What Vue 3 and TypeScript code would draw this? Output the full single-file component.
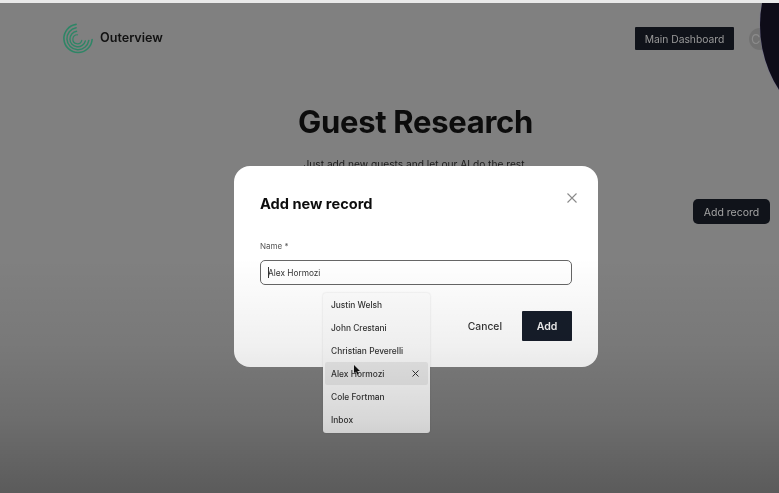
<script setup lang="ts">
const names: string[] = ['Justin Welsh', 'John Crestani', 'Christian Peverelli', 'Alex Hormozi', 'Cole Fortman', 'Inbox']
</script>

<template>
  <div class="page">
    <header class="top">
      <div class="brand">
        <svg class="logo" width="32" height="32" viewBox="0 0 34 33" fill="none" stroke="#2f8566" stroke-linecap="round">
          <path d="M15 1A15 15 0 1 0 32 17" stroke-width="1.7" />
          <path d="M15 4.6A11.7 11.7 0 1 0 28.5 18" stroke-width="1.6" />
          <path d="M15.5 8.3A8.3 8.3 0 1 0 24.8 18.5" stroke-width="1.5" />
          <path d="M16.5 12A4.8 4.8 0 1 0 21 18" stroke-width="1.3" />
        </svg>
        <span class="brand-name">Outerview</span>
      </div>
      <div class="top-right">
        <button class="dash">Main Dashboard</button>
        <span class="avatar">C</span>
      </div>
    </header>
    <main class="main">
      <h1 class="title">Guest Research</h1>
      <p class="sub">Just add new guests and let our AI do the rest.</p>
    </main>
    <div class="actions"><button class="add-record">Add record</button></div>

    <div class="blob"></div>

    <section class="modal">
      <div class="modal-head">
        <h2 class="modal-title">Add new record</h2>
        <svg class="close" width="10" height="10" viewBox="0 0 10 10" stroke="#8a8a8a" stroke-width="1.1"><path d="M.5.5l9 9M9.5.5l-9 9" /></svg>
      </div>
      <label class="label">Name *</label>
      <div class="input"><span class="caret"></span>Alex Hormozi</div>
      <div class="foot">
        <span class="cancel">Cancel</span>
        <button class="add">Add</button>
      </div>
    </section>

    <ul class="menu">
      <li v-for="n in names" :key="n" class="item" :class="{ on: n === 'Alex Hormozi' }">
        <span>{{ n }}</span>
        <svg v-if="n === 'Alex Hormozi'" width="7" height="7" viewBox="0 0 7 7" stroke="#333" stroke-width="1"><path d="M.5.5l6 6M6.5.5l-6 6" /></svg>
      </li>
    </ul>
    <svg class="cursor" width="7" height="10" viewBox="0 0 7 10"><path d="M0 0v8l2-1.6L3.4 9.6l1.3-.5L3.4 6H6z" fill="#111" /></svg>

    <div class="shade"></div>
  </div>
</template>

<style>
html, body { margin: 0; background: #7f7f7f; }
</style>

<style scoped>
.page {
  position: relative;
  width: 779px;
  height: 493px;
  box-sizing: border-box;
  overflow: hidden;
  background: #808080;
  border-top: 3px solid #e9e9e9;
  font-family: Inter, "Liberation Sans", sans-serif;
  filter: blur(0.45px);
}
.top {
  display: flex;
  justify-content: space-between;
  align-items: center;
  padding: 19px 0 0 62px;
  height: 33px;
}
.brand { display: flex; align-items: center; gap: 6px; }
.logo { display: block; }
.brand-name { font-size: 12.6px; font-weight: 600; color: #111; margin-top: -3px; }
.top-right { display: flex; align-items: center; gap: 15px; margin-right: 8px; margin-top: 0; }
.dash {
  width: 99px; height: 23px; padding: 1px 0 0; border: 0; border-radius: 1px;
  background: #10131a; color: #9a9a9a; font: 400 10.3px Inter, sans-serif;
}
.avatar {
  width: 22px; height: 22px; box-sizing: border-box; padding-left: 2px; border-radius: 50%; background: #727272; color: #8c8c8c;
  font-size: 13px; display: flex; align-items: center;
}
.main { display: flex; flex-direction: column; align-items: center; padding: 47px 0 0 52px; }
.title { margin: 0; font-size: 31px; line-height: 40px; font-weight: 700; color: #0c0c0c; letter-spacing: -.3px; }
.sub { margin: 15px 0 0; font-size: 10.2px; line-height: 14px; color: #1a1a1a; }
.actions { display: flex; justify-content: flex-end; padding: 28px 9px 0 0; }
.add-record {
  width: 77px; height: 25px; padding: 1px 0 0; border: 0; border-radius: 5px;
  background: #10131a; color: #a4a4a4; font: 400 10.5px Inter, sans-serif;
}
.blob {
  position: absolute; left: 760px; top: -98px; width: 240px; height: 240px;
  border-radius: 50%; background: #0e0c18; box-shadow: 0 0 1px #6b64a0;
}
.modal {
  position: absolute; left: 234px; top: 163px; width: 364px; height: 201px;
  box-sizing: border-box; padding: 28px 26px 0; border-radius: 16px; background: #fff;
  display: flex; flex-direction: column;
}
.modal-head { display: flex; justify-content: space-between; align-items: flex-start; }
.modal-title { margin: 0; font-size: 14.6px; line-height: 20px; font-weight: 700; color: #0d0d0d; }
.close { margin-top: -1px; margin-right: -5px; }
.label { margin-top: 26px; font-size: 8px; line-height: 12px; color: #555; }
.input {
  margin-top: 8px; height: 25px; box-sizing: border-box; border: 1px solid #666; border-radius: 5px;
  display: flex; align-items: center; padding-left: 7px; font-size: 8.3px; color: #333;
}
.caret { width: 1px; height: 11px; background: #333; margin-right: -1px; }
.foot { display: flex; justify-content: flex-end; align-items: center; gap: 21px; margin-top: 26px; }
.cancel { font-size: 10.3px; font-weight: 500; color: #333; margin-right: -1px; }
.add {
  width: 50px; height: 30px; padding: 0; border: 0; border-radius: 1px;
  background: #161d2a; color: #f2f2f2; font: 600 10.5px Inter, sans-serif;
}
.menu {
  position: absolute; left: 323px; top: 290px; width: 107px; height: 140px;
  box-sizing: border-box; margin: 0; padding: 0 2px 2px; list-style: none; border-radius: 3px;
  background: #fdfdfd; box-shadow: 0 0 2px rgba(0,0,0,.15);
  display: flex; flex-direction: column; justify-content: center;
}
.item {
  height: 23px; flex: none; display: flex; align-items: center; justify-content: space-between;
  padding: 0 9px 0 6px; font-size: 8.4px; font-weight: 500; color: #333; border-radius: 2px;
}
.item.on { background: #ececec; }
.cursor { position: absolute; left: 354px; top: 362px; }
.shade {
  position: absolute; inset: 0; pointer-events: none;
  background: linear-gradient(to bottom, rgba(0,0,0,0) 0, rgba(0,0,0,0) 52%, rgba(0,0,0,.06) 70%, rgba(0,0,0,.15) 85%, rgba(0,0,0,.29) 100%);
}
</style>
